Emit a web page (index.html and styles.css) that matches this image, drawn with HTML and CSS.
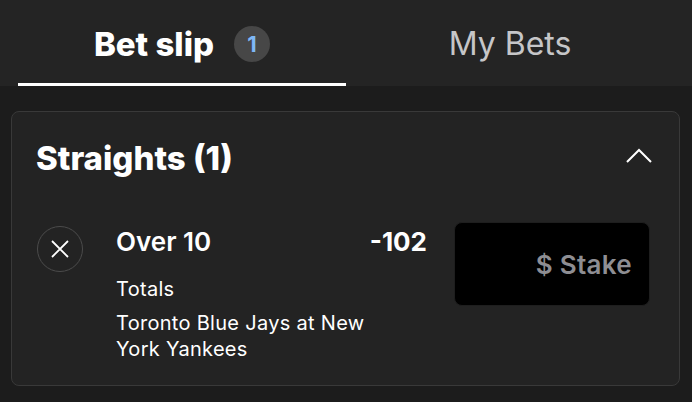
FILE: index.html
```html
<!DOCTYPE html>
<html lang="en">
<head>
  <meta charset="UTF-8" />
  <meta name="viewport" content="width=device-width, initial-scale=1.0"/>
  <title>Bet slip</title>
  <link rel="stylesheet" href="styles.css">
</head>
<body>
  <nav class="tabs">
    <div class="tab active">Bet slip <span class="badge">1</span></div>
    <div class="tab">My Bets</div>
  </nav>

  <main class="slip">
    <section class="card">
      <div class="card-head">
        <h2>Straights (1)</h2>
        <svg class="chevron" width="26" height="16" viewBox="0 0 26 16">
          <polyline points="1,14 13,2 25,14" fill="none" stroke="#fff" stroke-width="2"/>
        </svg>
      </div>

      <div class="bet-row">
        <button class="close" aria-label="Remove">
          <svg width="18" height="18" viewBox="0 0 18 18">
            <path d="M1 1 L17 17 M17 1 L1 17" stroke="#fff" stroke-width="1.8" fill="none"/>
          </svg>
        </button>
        <div class="bet-info">
          <div class="bet-top">
            <span class="selection">Over 10</span>
            <span class="odds">-102</span>
          </div>
          <div class="market">Totals</div>
          <div class="event">Toronto Blue Jays at New York Yankees</div>
        </div>
        <div class="stake">$ Stake</div>
      </div>
    </section>
  </main>
</body>
</html>
```

FILE: styles.css
```css
body {
  margin: 0;
  background-color: #1c1c1c;
  color: #fff;
  font-family: Inter, "Noto Sans", sans-serif;
}
.tabs {
  display: flex;
  height: 86px;
  padding: 0 18px;
  background-color: #242424;
  box-sizing: border-box;
}
.tab {
  flex: 1;
  display: flex;
  align-items: center;
  justify-content: center;
  gap: 20px;
  padding-top: 4px;
  border-bottom: 3px solid transparent;
  font-size: 32px;
  color: #c6c6c8;
}
.tab.active {
  color: #fff;
  font-size: 33px;
  font-weight: 800;
  border-bottom-color: #fff;
}
.badge {
  width: 36px;
  height: 36px;
  border-radius: 50%;
  background-color: #474747;
  color: #7fb8f6;
  font-size: 22px;
  font-weight: 700;
  display: flex;
  align-items: center;
  justify-content: center;
}
.slip {
  padding: 25px 12px 0 11px;
}
.card {
  background-color: #232323;
  border: 1px solid #393939;
  border-radius: 8px;
  padding: 26px 29px 23px 24px;
}
.card-head {
  display: flex;
  align-items: center;
  justify-content: space-between;
}
.card-head h2 {
  margin: 0;
  font-size: 33px;
  line-height: 40px;
  font-weight: 800;
}
.chevron {
  margin-right: -2px;
  margin-top: -4px;
}
.bet-row {
  display: flex;
  align-items: flex-start;
  margin-top: 44px;
}
.close {
  width: 46px;
  height: 46px;
  margin: 4px 0 0 1px;
  border-radius: 50%;
  border: 1.5px solid #4b4b4b;
  background: none;
  display: flex;
  align-items: center;
  justify-content: center;
  padding: 0;
}
.bet-info {
  flex: 1;
  margin-left: 33px;
  padding-top: 4px;
}
.bet-top {
  display: flex;
  justify-content: space-between;
  font-size: 26px;
  line-height: 32px;
}
.selection {
  font-weight: 600;
}
.odds {
  font-weight: 700;
}
.market, .event {
  font-size: 20px;
  line-height: 26px;
  letter-spacing: 0.3px;
}
.market {
  margin-top: 18px;
}
.event {
  margin-top: 8px;
  max-width: 270px;
}
.stake {
  width: 196px;
  height: 84px;
  margin-left: 27px;
  box-sizing: border-box;
  background-color: #000;
  border: 1px solid #1e1e1e;
  border-radius: 8px;
  display: flex;
  align-items: center;
  justify-content: flex-end;
  padding-right: 17px;
  font-size: 26px;
  font-weight: 600;
  letter-spacing: 0.3px;
  color: #8e8e93;
}
```
